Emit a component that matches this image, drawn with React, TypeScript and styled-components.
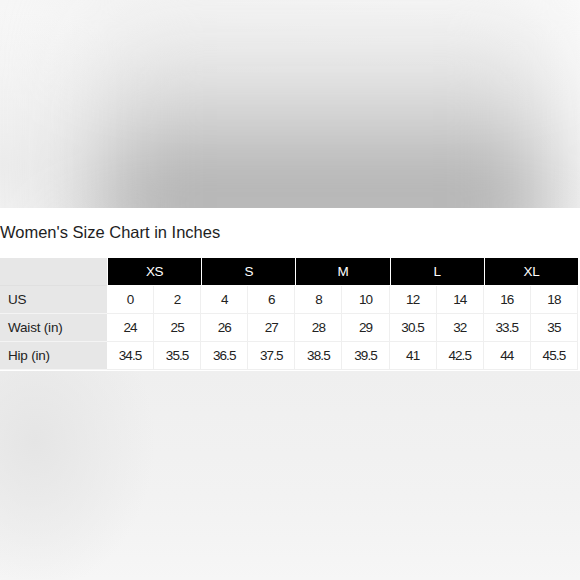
import React from 'react'
import styled, { createGlobalStyle } from 'styled-components'

const GlobalStyle = createGlobalStyle`
  html, body {
    margin: 0;
    padding: 0;
    background: #ffffff;
  }
  body {
    font-family: 'Liberation Sans', Arial, sans-serif;
  }
`

type Group = { size: string; cols: string[][] }

const groups: Group[] = [
  { size: 'XS', cols: [['0', '24', '34.5'], ['2', '25', '35.5']] },
  { size: 'S', cols: [['4', '26', '36.5'], ['6', '27', '37.5']] },
  { size: 'M', cols: [['8', '28', '38.5'], ['10', '29', '39.5']] },
  { size: 'L', cols: [['12', '30.5', '41'], ['14', '32', '42.5']] },
  { size: 'XL', cols: [['16', '33.5', '44'], ['18', '35', '45.5']] },
]

const rowLabels = ['US', 'Waist (in)', 'Hip (in)']

const Page = styled.div`
  width: 580px;
  height: 580px;
  display: flex;
  flex-direction: column;
  overflow: hidden;
`

// soft photo shadow above the chart
const TopBand = styled.div`
  position: relative;
  overflow: hidden;
  height: 208px;
  flex-shrink: 0;
  background:
    radial-gradient(ellipse 35% 75% at 0% 80%, rgba(236, 236, 236, 1) 0%, rgba(242, 242, 242, 0) 100%),
    linear-gradient(165deg, #f6f6f6 0%, #fbfbfb 40%, #ffffff 100%);

  &::after {
    content: '';
    position: absolute;
    left: 95px;
    right: 25px;
    bottom: -50px;
    height: 280px;
    background: linear-gradient(to top, #9c9c9c 0%, #a8a8a8 18%, #bdbdbd 34%, #d4d4d4 50%, #e6e6e6 68%, rgba(244, 244, 244, 0) 100%);
    filter: blur(45px);
  }
`

const Chart = styled.div`
  height: 163px;
  flex-shrink: 0;
  background: #ffffff;
  display: flex;
  flex-direction: column;
`

const Title = styled.div`
  font-size: 16.5px;
  line-height: 18px;
  color: #1e1e1e;
  padding: 15px 0 0 0;
  height: 35px;
  box-sizing: border-box;
`

const Grid = styled.div`
  margin-top: 15px;
  width: 578px;
  display: grid;
  grid-template-columns: 107px repeat(10, 1fr);
  grid-auto-rows: 28px;
  font-size: 13.5px;
  color: #222;
`

const LabelCell = styled.div<{ $head?: boolean }>`
  background: #e7e7e7;
  border-bottom: 1px solid ${(p) => (p.$head ? '#e0e0e0' : '#f4f4f4')};
  display: flex;
  align-items: center;
  padding-left: 8px;
  letter-spacing: -0.2px;
`

const SizeHead = styled.div`
  grid-column: span 2;
  background: #000000;
  color: #ffffff;
  margin-left: 1px;
  margin-bottom: 1px;
  display: flex;
  align-items: center;
  justify-content: center;
  font-size: 13.5px;
  letter-spacing: -0.3px;
`

const Cell = styled.div`
  border-right: 1px solid #efefef;
  border-bottom: 1px solid #efefef;
  display: flex;
  align-items: center;
  justify-content: center;
  letter-spacing: -0.9px;
`

const BottomBand = styled.div`
  flex: 1;
  background:
    radial-gradient(ellipse 120px 150px at 35px 70px, rgba(229, 229, 229, 1) 0%, rgba(240, 240, 240, 0) 100%),
    linear-gradient(180deg, #efefef 0%, #f2f2f2 60%, #f6f6f6 100%);
`

const App: React.FC = () => {
  return (
    <Page>
      <GlobalStyle />
      <TopBand />
      <Chart>
        <Title>Women's Size Chart in Inches</Title>
        <Grid>
          <LabelCell $head />
          {groups.map((g) => (
            <SizeHead key={g.size}>{g.size}</SizeHead>
          ))}
          {rowLabels.map((label, r) => (
            <React.Fragment key={label}>
              <LabelCell>{label}</LabelCell>
              {groups.flatMap((g) =>
                g.cols.map((col, c) => <Cell key={g.size + c}>{col[r]}</Cell>)
              )}
            </React.Fragment>
          ))}
        </Grid>
      </Chart>
      <BottomBand />
    </Page>
  )
}

export default App
